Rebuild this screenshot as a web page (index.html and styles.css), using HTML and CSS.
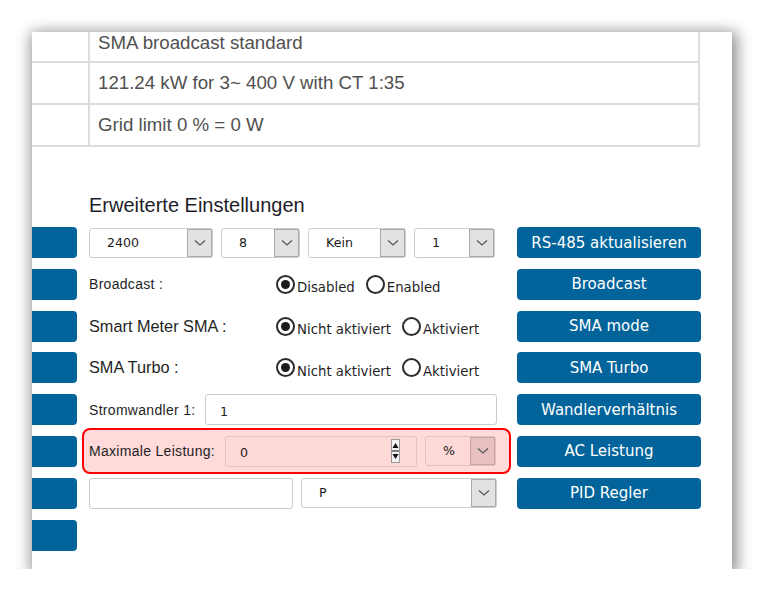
FILE: index.html
```html
<!DOCTYPE html>
<html lang="de">
<head>
<meta charset="utf-8">
<title>Erweiterte Einstellungen</title>
<link rel="stylesheet" href="styles.css">
</head>
<body>
<div class="panel">
  <div class="info">
    <div class="info-row first"><div class="info-key"></div><div class="info-val">SMA broadcast standard</div></div>
    <div class="info-row"><div class="info-key"></div><div class="info-val">121.24 kW for 3~ 400 V with CT 1:35</div></div>
    <div class="info-row"><div class="info-key"></div><div class="info-val">Grid limit 0 % = 0 W</div></div>
  </div>

  <h2 class="heading">Erweiterte Einstellungen</h2>

  <div class="form">
    <div class="row">
      <div class="stub"></div>
      <div class="content">
        <div class="sel w124"><span class="sel-val">2400</span><span class="sel-arrow"><svg width="12" height="8" viewBox="0 0 12 8"><polyline points="1,1.5 6,6 11,1.5" fill="none" stroke="#555" stroke-width="1.2"/></svg></span></div>
        <div class="sel w79"><span class="sel-val">8</span><span class="sel-arrow"><svg width="12" height="8" viewBox="0 0 12 8"><polyline points="1,1.5 6,6 11,1.5" fill="none" stroke="#555" stroke-width="1.2"/></svg></span></div>
        <div class="sel w98"><span class="sel-val">Kein</span><span class="sel-arrow"><svg width="12" height="8" viewBox="0 0 12 8"><polyline points="1,1.5 6,6 11,1.5" fill="none" stroke="#555" stroke-width="1.2"/></svg></span></div>
        <div class="sel w81"><span class="sel-val">1</span><span class="sel-arrow"><svg width="12" height="8" viewBox="0 0 12 8"><polyline points="1,1.5 6,6 11,1.5" fill="none" stroke="#555" stroke-width="1.2"/></svg></span></div>
      </div>
      <button class="btn">RS-485 aktualisieren</button>
    </div>

    <div class="row">
      <div class="stub"></div>
      <div class="content radios">
        <span class="label small lw187">Broadcast :</span>
        <span class="radio on"></span><span class="rlabel">Disabled</span>
        <span class="radio gap"></span><span class="rlabel">Enabled</span>
      </div>
      <button class="btn">Broadcast</button>
    </div>

    <div class="row">
      <div class="stub"></div>
      <div class="content radios">
        <span class="label big lw187">Smart Meter SMA :</span>
        <span class="radio on"></span><span class="rlabel">Nicht aktiviert</span>
        <span class="radio gap"></span><span class="rlabel">Aktiviert</span>
      </div>
      <button class="btn">SMA mode</button>
    </div>

    <div class="row">
      <div class="stub"></div>
      <div class="content radios">
        <span class="label big lw187">SMA Turbo :</span>
        <span class="radio on"></span><span class="rlabel">Nicht aktiviert</span>
        <span class="radio gap"></span><span class="rlabel">Aktiviert</span>
      </div>
      <button class="btn">SMA Turbo</button>
    </div>

    <div class="row">
      <div class="stub"></div>
      <div class="content">
        <span class="label small lw116">Stromwandler 1:</span>
        <div class="field grow"><span class="field-val">1</span></div>
      </div>
      <button class="btn">Wandlerverhältnis</button>
    </div>

    <div class="row">
      <div class="stub"></div>
      <div class="content hl">
        <span class="label small lw136">Maximale Leistung:</span>
        <div class="field pink w192"><span class="field-val">0</span>
          <span class="spin"><svg width="9" height="24" viewBox="0 0 9 24"><rect x="0.5" y="0.5" width="8" height="23" fill="#f3f3f3" stroke="#999"/><polygon points="1.5,9 4.5,4 7.5,9" fill="#111"/><line x1="1" y1="12" x2="8" y2="12" stroke="#111" stroke-width="1"/><polygon points="1.5,15 4.5,20 7.5,15" fill="#111"/></svg></span>
        </div>
        <div class="sel pink w71"><span class="sel-val">%</span><span class="sel-arrow"><svg width="12" height="8" viewBox="0 0 12 8"><polyline points="1,1.5 6,6 11,1.5" fill="none" stroke="#555" stroke-width="1.2"/></svg></span></div>
      </div>
      <button class="btn">AC Leistung</button>
    </div>

    <div class="row">
      <div class="stub"></div>
      <div class="content">
        <div class="field w204"></div>
        <div class="sel grow"><span class="sel-val">P</span><span class="sel-arrow"><svg width="12" height="8" viewBox="0 0 12 8"><polyline points="1,1.5 6,6 11,1.5" fill="none" stroke="#555" stroke-width="1.2"/></svg></span></div>
      </div>
      <button class="btn">PID Regler</button>
    </div>

    <div class="row">
      <div class="stub"></div>
    </div>
  </div>
</div>
</body>
</html>
```
FILE: styles.css
```css
html, body {
  margin: 0;
  padding: 0;
  background: #ffffff;
}
body {
  padding: 32px 0 0 32px;
  font-family: "Liberation Sans", Arial, sans-serif;
}
.panel {
  width: 700px;
  height: 537px;
  background: #ffffff;
  overflow: hidden;
  box-shadow: 2px 3px 14px 3px rgba(0, 0, 0, 0.45);
}
.info {
  width: 668px;
}
.info-row {
  display: flex;
  height: 40px;
  border-bottom: 2px solid #dcdcdc;
  border-right: 2px solid #dcdcdc;
}
.info-row.first {
  height: 29px;
}
.info-key {
  width: 56px;
  border-right: 2px solid #dcdcdc;
  flex: none;
}
.info-val {
  padding-left: 8px;
  line-height: 40px;
  font-size: 18.7px;
  color: #505050;
}
.info-row.first .info-val {
  line-height: 21.5px;
}
.heading {
  margin: 46px 0 10px 57px;
  font-size: 20px;
  line-height: 24px;
  font-weight: normal;
  color: #1e1e28;
}
.row {
  display: flex;
  align-items: center;
  height: 31px;
  margin-bottom: 10.8px;
}
.stub {
  width: 45px;
  height: 31px;
  flex: none;
  background: #02649b;
  border-radius: 0 4px 4px 0;
}
.content {
  margin-left: 12px;
  width: 408px;
  flex: none;
  display: flex;
  align-items: center;
  gap: 8px;
}
.content.radios {
  gap: 0;
}
.btn {
  margin-left: 20px;
  width: 184px;
  height: 31px;
  flex: none;
  border: none;
  border-radius: 4px;
  background: #02649b;
  color: #ffffff;
  font-family: "DejaVu Sans", Verdana, sans-serif;
  font-size: 15px;
  padding: 0;
}
.sel {
  display: flex;
  height: 30px;
  box-sizing: border-box;
  border: 1px solid #cdcdcd;
  border-radius: 3px;
  background: #ffffff;
  flex: none;
}
.sel-val {
  flex: 1;
  padding-left: 17px;
  line-height: 28px;
  font-family: "DejaVu Sans", Verdana, sans-serif;
  font-size: 12.6px;
  color: #1a1a1a;
}
.sel-arrow {
  width: 25px;
  box-sizing: border-box;
  border: 1px solid #aaaaaa;
  background: #e2e2e2;
  display: flex;
  align-items: center;
  justify-content: center;
}
.w124 { width: 124px; }
.w79 { width: 79px; }
.w98 { width: 98px; }
.w81 { width: 81px; }
.w71 { width: 71px; }
.w192 { width: 192px; }
.w204 { width: 204px; }
.grow { flex: 1; }
.label {
  flex: none;
  color: #1f1f1f;
}
.small {
  font-size: 14px;
  letter-spacing: 0.3px;
}
.big {
  font-size: 16.3px;
}
.lw187 { width: 187px; }
.lw116 { width: 108px; }
.lw136 { width: 128px; }
.radio {
  width: 19px;
  height: 19px;
  box-sizing: border-box;
  border: 2px solid #2b2b2b;
  border-radius: 50%;
  background: #ffffff;
  flex: none;
  display: flex;
  align-items: center;
  justify-content: center;
  margin-right: 2px;
}
.radio.on::after {
  content: "";
  width: 9px;
  height: 9px;
  border-radius: 50%;
  background: #1b1b1b;
}
.radio.gap {
  margin-left: 11px;
}
.rlabel {
  font-family: "DejaVu Sans", Verdana, sans-serif;
  font-size: 13.3px;
  color: #1f1f1f;
  margin-top: 7px;
}
.field {
  height: 31px;
  box-sizing: border-box;
  border: 1px solid #cbcbcb;
  border-radius: 3px;
  background: #ffffff;
  display: flex;
  align-items: center;
  flex: none;
}
.field.grow { flex: 1; }
.field-val {
  flex: 1;
  padding-left: 14px;
  font-family: "DejaVu Sans", Verdana, sans-serif;
  font-size: 12.6px;
  color: #1a1a1a;
  padding-top: 3px;
}
.content.hl {
  margin-left: 5px;
  margin-right: -14px;
  width: 429px;
  height: 46px;
  box-sizing: border-box;
  border: 2px solid #ff0000;
  border-radius: 8px;
  background: #ffdada;
  padding: 0 13px 0 5px;
}
.field.pink {
  background: #ffd8d8;
  border-color: #e7bebe;
}
.sel.pink {
  background: #ffd8d8;
  border-color: #e7bebe;
}
.sel.pink .sel-arrow {
  background: #e8c0c0;
  border-color: #c9a3a3;
}
.spin {
  display: flex;
  margin-right: 16px;
}
```
